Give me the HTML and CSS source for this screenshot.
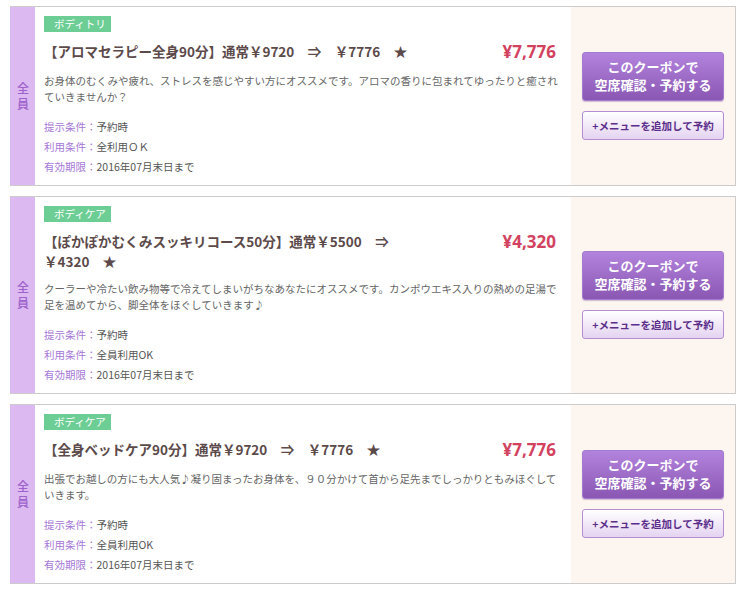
FILE: index.html
```html
<!DOCTYPE html>
<html lang="ja">
<head>
<meta charset="utf-8">
<title>クーポン一覧</title>
<link rel="stylesheet" href="styles.css">
</head>
<body>
<div class="list">
  <div class="card">
    <div class="strip"><span>全<br>員</span></div>
    <div class="main">
      <div class="tag">ボディトリ</div>
      <div class="head">
        <h2 class="title">【アロマセラピー全身90分】通常￥9720　⇒　￥7776　★</h2>
        <div class="price">¥7,776</div>
      </div>
      <p class="desc">お身体のむくみや疲れ、ストレスを感じやすい方にオススメです。アロマの香りに包まれてゆったりと癒されていきませんか？</p>
      <dl class="conds">
        <div class="cond"><dt>提示条件：</dt><dd>予約時</dd></div>
        <div class="cond"><dt>利用条件：</dt><dd>全利用ＯＫ</dd></div>
        <div class="cond"><dt>有効期限：</dt><dd>2016年07月末日まで</dd></div>
      </dl>
    </div>
    <div class="side">
      <a class="btn-main" href="#">このクーポンで<br>空席確認・予約する</a>
      <a class="btn-sub" href="#">+メニューを追加して予約</a>
    </div>
  </div>

  <div class="card">
    <div class="strip"><span>全<br>員</span></div>
    <div class="main">
      <div class="tag">ボディケア</div>
      <div class="head">
        <h2 class="title">【ぽかぽかむくみスッキリコース50分】通常￥5500　⇒　￥4320　★</h2>
        <div class="price">¥4,320</div>
      </div>
      <p class="desc">クーラーや冷たい飲み物等で冷えてしまいがちなあなたにオススメです。カンポウエキス入りの熱めの足湯で足を温めてから、脚全体をほぐしていきます♪</p>
      <dl class="conds">
        <div class="cond"><dt>提示条件：</dt><dd>予約時</dd></div>
        <div class="cond"><dt>利用条件：</dt><dd>全員利用OK</dd></div>
        <div class="cond"><dt>有効期限：</dt><dd>2016年07月末日まで</dd></div>
      </dl>
    </div>
    <div class="side">
      <a class="btn-main" href="#">このクーポンで<br>空席確認・予約する</a>
      <a class="btn-sub" href="#">+メニューを追加して予約</a>
    </div>
  </div>

  <div class="card">
    <div class="strip"><span>全<br>員</span></div>
    <div class="main">
      <div class="tag">ボディケア</div>
      <div class="head">
        <h2 class="title">【全身ベッドケア90分】通常￥9720　⇒　￥7776　★</h2>
        <div class="price">¥7,776</div>
      </div>
      <p class="desc desc-tight">出張でお越しの方にも大人気♪凝り固まったお身体を、９０分かけて首から足先までしっかりともみほぐしていきます。</p>
      <dl class="conds">
        <div class="cond"><dt>提示条件：</dt><dd>予約時</dd></div>
        <div class="cond"><dt>利用条件：</dt><dd>全員利用OK</dd></div>
        <div class="cond"><dt>有効期限：</dt><dd>2016年07月末日まで</dd></div>
      </dl>
    </div>
    <div class="side">
      <a class="btn-main" href="#">このクーポンで<br>空席確認・予約する</a>
      <a class="btn-sub" href="#">+メニューを追加して予約</a>
    </div>
  </div>
</div>
</body>
</html>
```

FILE: styles.css
```css
html, body {
  margin: 0;
  padding: 0;
  background: #ffffff;
}
body {
  font-family: "Noto Sans CJK JP", "Noto Sans", sans-serif;
  color: #555555;
}
.list {
  display: flex;
  flex-direction: column;
  gap: 10px;
  padding: 6px 11px 0 10px;
}
.card {
  display: flex;
  border: 1px solid #cccccc;
  border-left: 1px solid #dcb9f0;
  background: #ffffff;
}
.strip {
  width: 24px;
  flex: none;
  background: #dcb9f0;
  display: flex;
  align-items: center;
  justify-content: center;
  color: #9d61cb;
  font-size: 12px;
  font-weight: 500;
  line-height: 16px;
  text-align: center;
}
.main {
  flex: 1;
  padding: 9px 6px 8px 9px;
  min-width: 0;
}
.tag {
  width: 67px;
  height: 16px;
  box-sizing: border-box;
  padding-left: 10px;
  background: #6dce95;
  color: #ffffff;
  font-size: 10.5px;
  line-height: 16px;
  white-space: nowrap;
  overflow: hidden;
}
.head {
  display: flex;
  align-items: flex-start;
  justify-content: space-between;
  margin-top: 9px;
}
.title {
  margin: 0;
  width: 392px;
  font-size: 13.5px;
  font-weight: bold;
  line-height: 20px;
  color: #5c4a4a;
}
.price {
  padding-right: 9px;
  font-family: "Noto Sans", sans-serif;
  font-size: 17px;
  font-weight: bold;
  line-height: 22px;
  color: #d2425f;
}
.desc {
  margin: 10px 0 0;
  font-size: 10.5px;
  line-height: 16px;
  color: #666666;
}
.desc-tight {
  letter-spacing: -0.03px;
}
.conds {
  margin: 12px 0 0;
  font-size: 10.5px;
  line-height: 20px;
}
.cond {
  display: flex;
}
.cond dt {
  color: #a577d6;
}
.cond dd {
  margin: 0;
  color: #555555;
}
.side {
  width: 164px;
  flex: none;
  background: #fdf5ef;
  display: flex;
  flex-direction: column;
  justify-content: center;
  gap: 10px;
  padding: 0 11px;
  box-sizing: border-box;
}
.btn-main {
  display: block;
  height: 49px;
  box-sizing: border-box;
  padding-top: 5px;
  border: 1px solid #a37bd0;
  border-radius: 3px;
  background: linear-gradient(#b283dd, #8a57b3);
  color: #ffffff;
  font-size: 13px;
  font-weight: bold;
  line-height: 18px;
  text-align: center;
  text-decoration: none;
  box-shadow: 0 1px 1px rgba(120, 80, 150, 0.35);
}
.btn-sub {
  display: block;
  height: 29px;
  box-sizing: border-box;
  border: 1px solid #b58dd3;
  border-radius: 3px;
  background: linear-gradient(#ffffff, #e4d3f1);
  color: #5b2d8a;
  font-size: 10.5px;
  font-weight: bold;
  line-height: 27px;
  text-align: center;
  text-decoration: none;
}
```
